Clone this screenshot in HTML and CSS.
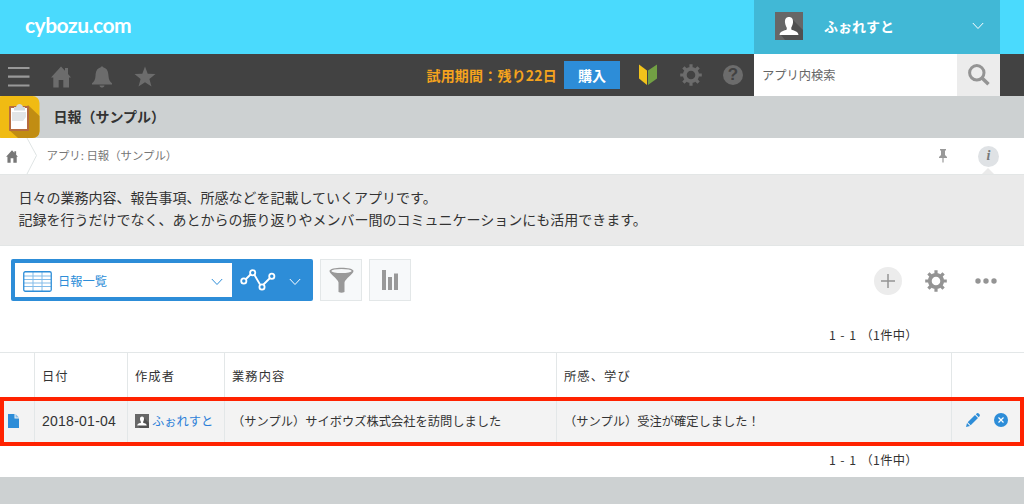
FILE: index.html
```html
<!DOCTYPE html>
<html lang="ja">
<head>
    <meta charset="UTF-8">
    <meta name="viewport" content="width=device-width, initial-scale=1.0">
    <title>日報（サンプル）</title>
    <link rel="stylesheet" href="styles.css">
</head>
<body>
    <svg class="defs" width="0" height="0">
        <symbol id="home" viewBox="0 0 20 22">
            <path d="M10 0.5 L14 4.8 V2 H17 V8 L20 11.5 H18 V21.5 H12.3 V14 H7.7 V21.5 H2.3 V11.5 H0 Z"/>
        </symbol>
        <symbol id="gear" viewBox="0 0 22 22">
            <circle cx="11" cy="11" r="6.2" fill="none" stroke="currentColor" stroke-width="3.8"/>
            <path d="M11 0.2V4M11 18V21.8M0.2 11H4M18 11H21.8M3.4 3.4L6 6M16 16L18.6 18.6M3.4 18.6L6 16M16 6L18.6 3.4" stroke="currentColor" stroke-width="3.2"/>
        </symbol>
        <symbol id="person" viewBox="0 0 28 28">
            <path d="M0 0H28V28H0Z" fill="#676767"/>
            <path d="M18 8L28 18V28H10L6 23Z" fill="#505050"/>
            <path d="M14 5C17 5 18.3 7.200 18 10.500C17.700 13 16.800 14.500 16.300 15.500V17.500C18.500 19 23 18.500 23.500 23H4.500C5 18.500 9.500 19 11.700 17.500V15.500C11.200 14.500 10.300 13 10 10.500C9.700 7.200 11 5 14 5Z" fill="#fff"/>
        </symbol>
        <symbol id="chevron" viewBox="0 0 12 8">
            <path d="M0.800 1L6 6.500L11.200 1" fill="none" stroke="currentColor" stroke-width="1"/>
        </symbol>
    </svg>

    <header class="top">
        <h1 class="logo">cybozu.com</h1>
        <div class="user">
            <svg class="avatar"><use href="#person"/></svg>
            <span class="user-name">ふぉれすと</span>
            <svg class="chevron"><use href="#chevron"/></svg>
        </div>
    </header>

    <nav class="nav">
        <div class="nav-left">
            <svg width="22" height="22" viewBox="0 0 22 22"><path d="M0 2H21.500M0 10.700H21.500M0 19.500H21.500" stroke="#999" stroke-width="2.200"/></svg>
            <svg width="20" height="22"><use href="#home"/></svg>
            <svg width="22" height="22" viewBox="0 0 22 22"><path d="M9.500 1.500C9.500 0 12.500 0 12.500 1.500C16.500 2.500 17.300 6 17.500 10C17.700 14 19 15.500 21 17.200V18.500H1V17.200C3 15.500 4.300 14 4.500 10C4.700 6 5.500 2.500 9.500 1.500ZM8.500 19.500H13.500C13 22.300 9 22.300 8.500 19.500Z"/></svg>
            <svg width="22" height="22" viewBox="0 0 22 22"><path d="M11 0.500L13.700 7.800L21.500 8.100L15.400 13L17.500 20.500L11 16.200L4.500 20.500L6.600 13L0.500 8.100L8.300 7.800Z"/></svg>
        </div>
        <div class="nav-right">
            <span class="trial">試用期間：残り22日</span>
            <button class="buy">購入</button>
            <svg class="beginner" width="20" height="22" viewBox="0 0 20 22"><path d="M1 0.500L9 6.500V21L1 14.500Z" fill="#f2c31b"/><path d="M19 0.500L10 6.500V21L19 14.500Z" fill="#72a044"/></svg>
            <svg class="nav-gear" width="22" height="22"><use href="#gear"/></svg>
            <span class="help">?</span>
        </div>
        <div class="search">
            <span class="search-text">アプリ内検索</span>
            <span class="search-button">
                <svg width="22" height="22" viewBox="0 0 22 22" fill="none" stroke="#949494"><circle cx="8.800" cy="8.800" r="7.200" stroke-width="3"/><path d="M14 14L20.500 20.300" stroke-width="3.500"/></svg>
            </span>
        </div>
    </nav>

    <div class="app-title">
        <svg width="40" height="42" viewBox="0 0 40 42">
            <rect x="-5" width="44.500" height="42" rx="7" fill="#f0bb13"/>
            <path d="M28 9L39.500 20V35Q39.500 42 32 42H18L9 34Z" fill="#c18d13"/>
            <rect x="9" y="10" width="20" height="25" rx="1" fill="#b66b40"/>
            <path d="M11 12H27V33H11Z" fill="#fff"/>
            <path d="M12 16H26V21L23 25H12Z" fill="#e2e5e7"/>
            <path d="M14 11H16C17 7 22 7 23 11H25V14.500H14Z" fill="#d4dadd"/>
        </svg>
        <h2>日報（サンプル）</h2>
    </div>

    <div class="breadcrumb">
        <svg class="crumb-home" width="12" height="13"><use href="#home"/></svg>
        <svg class="crumb-arrow" width="12" height="36" viewBox="0 0 12 36"><path d="M1 0L10.500 17.500L1 36" fill="none" stroke="#dfe4e4"/></svg>
        <span class="crumb-text">アプリ: 日報（サンプル）</span>
        <svg class="pin" width="8" height="14" viewBox="0 0 8 14"><path d="M1 0H7V1.500H6V6L8 8V9H4.600V13.500H3.400V9H0V8L2 6V1.500H1Z"/></svg>
        <span class="info">i</span>
    </div>

    <div class="description">
        <p>日々の業務内容、報告事項、所感などを記載していくアプリです。</p>
        <p>記録を行うだけでなく、あとからの振り返りやメンバー間のコミュニケーションにも活用できます。</p>
    </div>

    <div class="toolbar">
        <div class="view">
            <div class="view-name">
                <svg width="29" height="21" viewBox="0 0 29 21" fill="none" stroke="#2d8dd8">
                    <path d="M1 5H28M1 8.500H28M1 12H28M1 15.500H28M10 1V20M19 1V20" stroke="#83bce9"/>
                    <rect x="0.750" y="0.750" width="27.500" height="19.500" rx="1.500" stroke-width="1.300"/>
                </svg>
                <span>日報一覧</span>
                <svg class="chevron"><use href="#chevron"/></svg>
            </div>
            <svg class="graph" width="36" height="22" viewBox="0 0 36 22" fill="none" stroke="#fff" stroke-width="1.800">
                <path d="M6 10L10.500 5.500M14.500 6L20 15.500M23.500 15.500L30 9"/>
                <circle cx="3.800" cy="12" r="2.600"/><circle cx="12.700" cy="3.800" r="2.600"/><circle cx="22" cy="18" r="2.600"/><circle cx="31.800" cy="7.300" r="2.600"/>
            </svg>
            <svg class="chevron white"><use href="#chevron"/></svg>
        </div>
        <div class="tool">
            <svg width="25" height="26" viewBox="0 0 25 26"><path d="M0.500 4C0.500 -0.500 24.500 -0.500 24.500 4C24.500 7 16 12 15.500 15.500V25Q12.500 26.500 9.500 25V15.500C9 12 0.500 7 0.500 4Z" fill="#999"/><ellipse cx="12.500" cy="4" rx="10.200" ry="2" fill="#f5f7f8"/></svg>
        </div>
        <div class="tool">
            <svg width="18" height="20" viewBox="0 0 18 20" fill="#999"><path d="M1 0H5V20H1ZM7 7H11V20H7ZM13 3.500H17V20H13Z"/></svg>
        </div>
        <div class="actions">
            <span class="add"><svg width="14" height="14" viewBox="0 0 14 14"><path d="M7 0V14M0 7H14" stroke="#949494" stroke-width="1.500"/></svg></span>
            <svg width="22" height="22"><use href="#gear"/></svg>
            <svg class="more" width="22" height="6" viewBox="0 0 22 6"><circle cx="3" cy="3" r="2.700"/><circle cx="11" cy="3" r="2.700"/><circle cx="19" cy="3" r="2.700"/></svg>
        </div>
    </div>

    <div class="pager">1 - 1 <span>（1件中）</span></div>

    <div class="records">
        <div class="row head">
            <div></div>
            <div>日付</div>
            <div>作成者</div>
            <div>業務内容</div>
            <div>所感、学び</div>
            <div></div>
        </div>
        <div class="row">
            <div class="file"><svg width="11" height="14" viewBox="0 0 11 14"><path d="M0 0H6.500V4.500H11V14H0Z" fill="#2d8dd8"/><path d="M7.500 0L11 3.500H7.500Z" fill="#83bce9"/></svg></div>
            <div class="date">2018-01-04</div>
            <div class="author"><svg width="14" height="14"><use href="#person"/></svg>ふぉれすと</div>
            <div>（サンプル）サイボウズ株式会社を訪問しました</div>
            <div>（サンプル）受注が確定しました！</div>
            <div class="edit">
                <svg width="14" height="14" viewBox="0 0 14 14" fill="#2d8dd8"><path d="M0 14L1 10L4 13ZM1.700 9.200L9 2L12 5L4.700 12.300ZM9.800 1.200L11 0.200Q12 -0.300 13 0.800Q14.300 2 13.700 3L12.700 4.200Z"/></svg>
                <svg width="14" height="14" viewBox="0 0 14 14"><circle cx="7" cy="7" r="7" fill="#2d8dd8"/><path d="M4.500 4.500L9.500 9.500M9.500 4.500L4.500 9.500" stroke="#fff" stroke-width="1.200"/></svg>
            </div>
        </div>
        <div class="highlight"></div>
    </div>

    <div class="pager bottom">1 - 1 <span>（1件中）</span></div>
</body>
</html>
```
FILE: styles.css
```css
* {
    margin: 0;
    padding: 0;
    box-sizing: border-box;
}

body {
    height: 504px;
    overflow: hidden;
    background: #cdd1d2;
    color: #333;
    font-family: 'Noto Sans CJK JP', sans-serif;
    font-size: 12.25px;
}

svg {
    display: block;
    flex-shrink: 0;
}

.defs {
    position: absolute;
}

.top {
    display: flex;
    justify-content: space-between;
    height: 54px;
    padding-right: 24px;
    background: #4adafd;
}

.logo {
    padding: 9px 0 0 25px;
    color: #fff;
    font-family: Lato, sans-serif;
    font-size: 21px;
    line-height: 32px;
    letter-spacing: -0.5px;
}

.user {
    display: flex;
    align-items: center;
    width: 246px;
    padding: 0 16px 2px 21px;
    background: #41b8d6;
    color: #fff;
}

.avatar {
    width: 28px;
    height: 28px;
}

.user-name {
    margin-left: 21px;
    font-size: 14px;
    font-weight: bold;
}

.chevron {
    width: 12px;
    height: 8px;
    margin-left: auto;
}

.nav {
    display: flex;
    height: 42px;
    padding-right: 24px;
    background: #424242;
    color: #6c6c6c;
    fill: #6c6c6c;
}

.nav-left {
    display: flex;
    align-items: center;
    gap: 20.5px;
    padding: 4px 0 0 8px;
}

.nav-right {
    display: flex;
    align-items: center;
    margin-left: auto;
}

.trial {
    color: #f5a31d;
    font-size: 14px;
    font-weight: bold;
    letter-spacing: 0.2px;
}

.buy {
    width: 56px;
    height: 28px;
    margin-left: 7px;
    border: none;
    background: #2d8dd8;
    color: #fff;
    font-family: inherit;
    font-size: 14px;
    font-weight: bold;
}

.beginner {
    margin-left: 18px;
}

.nav-gear {
    margin-left: 22px;
}

.help {
    width: 20px;
    height: 20px;
    margin: 0 11px 0 21px;
    border-radius: 50%;
    background: #6c6c6c;
    color: #424242;
    font: bold 17px/20px 'Liberation Sans', sans-serif;
    text-align: center;
}

.search {
    display: flex;
    width: 246px;
    background: #fff;
}

.search-text {
    flex: 1;
    padding-left: 8px;
    color: #666;
    line-height: 42px;
}

.search-button {
    display: flex;
    align-items: center;
    justify-content: center;
    width: 43px;
    background: #ececec;
}

.app-title {
    display: flex;
    align-items: center;
    height: 42px;
}

.app-title h2 {
    margin-left: 13.5px;
    padding-bottom: 2px;
    font-size: 14px;
}

.breadcrumb {
    display: flex;
    align-items: center;
    height: 36px;
    padding-right: 25px;
    background: #fff;
    color: #777;
    fill: #777;
}

.crumb-home {
    margin-left: 6px;
}

.crumb-arrow {
    margin-left: 8px;
}

.crumb-text {
    margin-left: 8.5px;
    padding-bottom: 3px;
    font-size: 11.4px;
}

.pin {
    margin-left: auto;
    fill: #999;
}

.info {
    position: relative;
    width: 21px;
    height: 21px;
    margin-left: 31px;
    border-radius: 50%;
    background: #dfe2e5;
    font: italic bold 14px/20px 'Liberation Serif', serif;
    text-align: center;
}

.info::after {
    content: '';
    position: absolute;
    top: 22px;
    left: 4px;
    border: 6px solid transparent;
    border-top: none;
    border-bottom-color: #eaeaea;
}

.description {
    height: 72px;
    padding: 12px 18.5px;
    border-top: 1px solid #e3e6e6;
    border-bottom: 1px solid #e3e6e6;
    background: #eaeaea;
    font-size: 14px;
    line-height: 21.5px;
}

.toolbar {
    display: flex;
    height: 70px;
    padding: 13px 27px 0 11px;
    background: #fff;
    color: #949494;
}

.view {
    display: flex;
    align-items: center;
    width: 302px;
    height: 42px;
    padding: 4px;
    border-radius: 2px;
    background: #2d8dd8;
}

.view-name {
    display: flex;
    align-items: center;
    width: 217px;
    height: 34px;
    padding: 2px 9px 0 8px;
    background: #fff;
    color: #2d8dd8;
}

.view-name span {
    margin-left: 6px;
}

.graph {
    margin-left: 8px;
}

.view .chevron {
    margin-top: 2px;
}

.view .white {
    margin-top: 4px;
    margin-right: 8px;
    color: #fff;
}

.tool {
    display: flex;
    align-items: center;
    justify-content: center;
    width: 42px;
    height: 42px;
    margin-left: 7px;
    border: 1px solid #e3e7e8;
    background: #f7f9fa;
}

.actions {
    display: flex;
    align-items: center;
    gap: 23px;
    height: 43px;
    margin-left: auto;
    fill: #949494;
}

.more {
    margin-left: 5px;
}

.add {
    display: flex;
    align-items: center;
    justify-content: center;
    width: 28px;
    height: 28px;
    border-radius: 50%;
    background: #ececec;
}

.pager {
    height: 36px;
    padding-left: 829px;
    background: #fff;
    line-height: 38px;
    letter-spacing: 0.9px;
    white-space: nowrap;
}

.pager span {
    letter-spacing: 0.3px;
}

.records {
    position: relative;
    background: #fff;
}

.row {
    display: grid;
    grid-template-columns: 34px 93px 97px 332px 395px 73px;
    height: 45px;
    background: #f3f3f3;
}

.row > div {
    display: flex;
    align-items: center;
    padding-left: 7px;
    border-left: 1px solid #e3e7e8;
    white-space: nowrap;
}

.row > div:first-child {
    padding-left: 8px;
    border-left: none;
}

.head {
    height: 46px;
    border-top: 1px solid #e3e7e8;
    background: #fff;
    letter-spacing: 1.1px;
}

.row > .date {
    font-family: 'Liberation Sans', sans-serif;
    font-size: 14px;
    letter-spacing: 0.25px;
}

.row > .author {
    gap: 3px;
    color: #2d7fd8;
}

.row > .edit {
    gap: 14px;
    padding: 0 0 1px 14px;
}

/* 対象レコードの赤枠 */
.highlight {
    position: absolute;
    top: 45px;
    left: 0;
    width: 1024px;
    height: 49px;
    border: 4px solid #ff2200;
}

.bottom {
    height: 34px;
    line-height: 35px;
}
```
